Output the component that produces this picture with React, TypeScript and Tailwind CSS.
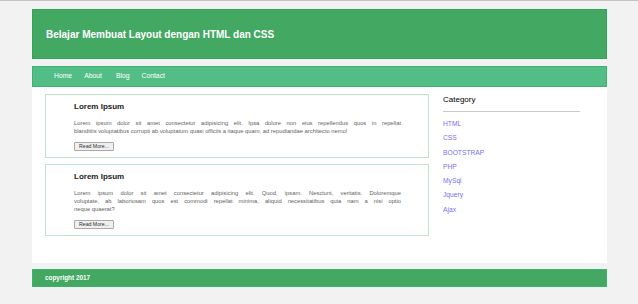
// each article's text, split into the lines it shows; all but the last are justified
const articles = [
  [
    "Lorem ipsum dolor sit amet consectetur adipisicing elit. Ipsa dolore non eius repellendus quos in repellat",
    "blanditiis voluptatibus corrupti ab voluptatum quasi officiis a itaque quam, ad repudiandae architecto nemo!",
  ],
  [
    "Lorem ipsum dolor sit amet consectetur adipisicing elit. Quod, ipsam. Nesciunt, veritatis. Doloremque",
    "voluptate, ab laboriosam quos est commodi repellat minima, aliquid necessitatibus quia nam a nisi optio",
    "neque quaerat?",
  ],
];

const categories = ["HTML", "CSS", "BOOTSTRAP", "PHP", "MySql", "Jquery", "Ajax"];

export default function App() {
  return (
    <div className="min-h-screen bg-[#f2f2f2] border-t border-[#c4c4c4] font-['Liberation_Sans',Arial,sans-serif]">
      <div className="ml-[32px] w-[575px] pt-[8px]">
        {/* Header */}
        <header className="h-[50px] bg-[#42a862] border border-[#2fa55b] flex items-center px-[13px]">
          <h1 className="text-white font-bold text-[10px]">Belajar Membuat Layout dengan HTML dan CSS</h1>
        </header>

        {/* Nav */}
        <nav className="mt-[7px] h-[21px] bg-[#52bd84] border border-[#3cb371] flex items-center pl-[21px]">
          <ul className="flex items-center gap-[12px] text-white text-[6.8px]">
            <li>Home</li>
            <li>About</li>
            <li className="ml-[2px]">Blog</li>
            <li>Contact</li>
          </ul>
        </nav>

        {/* Content */}
        <div className="bg-white flex pb-[27px]">
          <main className="pl-[13px] pt-[7px] w-[397px] flex flex-col gap-[6px]">
            {articles.map((lines, i) => (
              <article key={i} className="border border-[#bfe3cc] pl-[28px] pr-[27px] pt-[7px] pb-[6px]">
                <h2 className="font-bold text-[8px] leading-[9px] text-[#222]">Lorem Ipsum</h2>
                <p className="mt-[8px] text-[5.8px] leading-[8px] text-[#5f5f5f]">
                  {lines.map((line, j) => (
                    <span
                      key={j}
                      className={
                        j < lines.length - 1
                          ? "block whitespace-nowrap text-justify [text-align-last:justify]"
                          : "block"
                      }
                    >
                      {line}
                    </span>
                  ))}
                </p>
                <button className="mt-[7px] block border border-[#a9a9a9] bg-[#efefef] text-[5.2px] text-[#333] px-[4px] h-[9px] leading-[7px] rounded-[1px]">
                  Read More...
                </button>
              </article>
            ))}
          </main>

          <aside className="ml-[14px] w-[137px] pt-[8px]">
            <h3 className="text-[8px] leading-[10px] text-black">Category</h3>
            <hr className="mt-[6px] border-t border-[#c8c8c8]" />
            <ul className="mt-[8px] flex flex-col gap-[6.3px] text-[6.7px] leading-[8px] text-[#7a6ff0]">
              {categories.map((c) => (
                <li key={c}>{c}</li>
              ))}
            </ul>
          </aside>
        </div>

        {/* Footer */}
        <footer className="mt-[6px] h-[18px] bg-[#42a862] border border-[#3cb371] flex items-center px-[12px]">
          <span className="text-white font-bold text-[6.4px]">copyright 2017</span>
        </footer>
      </div>
    </div>
  );
}
